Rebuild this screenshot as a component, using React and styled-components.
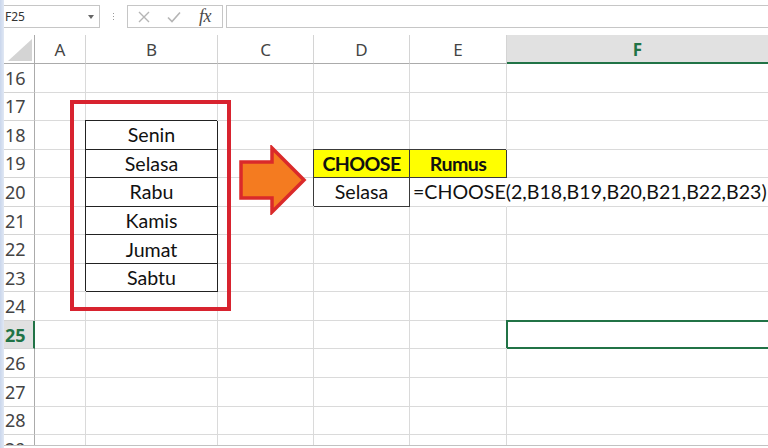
import React from "react";
import styled, { createGlobalStyle } from "styled-components";

const GlobalStyle = createGlobalStyle`
  html, body {
    margin: 0;
    padding: 0;
    background: #fff;
  }
  body {
    overflow: hidden;
  }
`;

const GREEN = "#217346";
const GRID = "#dadada";
const HEAD_LINE = "#ababab";

const COLS = [
  { key: "A", width: 51 },
  { key: "B", width: 132 },
  { key: "C", width: 96 },
  { key: "D", width: 96 },
  { key: "E", width: 97 },
  { key: "F", width: 262, selected: true },
];
const ROWS = [16, 17, 18, 19, 20, 21, 22, 23, 24, 25, 26, 27, 28, 29];
const SELECTED_ROW = 25;
const DAYS = ["Senin", "Selasa", "Rabu", "Kamis", "Jumat", "Sabtu"];

const CELLS = {
  D19: { text: "CHOOSE", frame: "#3a3a3a", fill: "#ffff00", bold: true },
  E19: { text: "Rumus", frame: "#3a3a3a", fill: "#ffff00", bold: true },
  D20: { text: "Selasa", frame: "#3a3a3a" },
  E20: { text: "=CHOOSE(2,B18,B19,B20,B21,B22,B23)", align: "flex-start", spill: true },
  F25: { selected: true },
};
DAYS.forEach((d, i) => {
  CELLS[`B${18 + i}`] = { text: d, frame: "#222" };
});

const Page = styled.div`
  position: relative;
  width: 768px;
  height: 448px;
  overflow: hidden;
  display: flex;
  background: #fff;
`;

const EdgeStrip = styled.div`
  width: 4px;
  flex: none;
  background: linear-gradient(to right, #c9d6ec, #e1e8f4);
`;

const Main = styled.div`
  flex: 1;
  min-width: 0;
  display: flex;
  flex-direction: column;
`;

const FormulaBar = styled.div`
  height: 35px;
  flex: none;
  box-sizing: border-box;
  padding-top: 5px;
  display: flex;
  align-items: flex-start;
`;

const NameBox = styled.div`
  width: 96px;
  height: 23px;
  box-sizing: border-box;
  border: 1px solid #c6c6c6;
  border-left: none;
  display: flex;
  align-items: center;
  justify-content: space-between;
  padding: 0 5px 0 1px;
  font: 12px "Noto Sans", sans-serif;
  color: #333;
`;

const DropArrow = styled.span`
  width: 0;
  height: 0;
  border-left: 3px solid transparent;
  border-right: 3px solid transparent;
  border-top: 4px solid #666;
`;

const Grip = styled.div`
  width: 27px;
  height: 23px;
  display: flex;
  flex-direction: column;
  align-items: center;
  justify-content: center;
  gap: 2px;

  span {
    width: 1px;
    height: 1px;
    background: #9a9a9a;
  }
`;

const FxBox = styled.div`
  width: 96px;
  height: 23px;
  box-sizing: border-box;
  border: 1px solid #c6c6c6;
  display: flex;
  align-items: center;
  padding-left: 10px;
  gap: 17px;
`;

const FxLabel = styled.span`
  margin-left: 1px;
  font: italic 18px "Liberation Serif", "DejaVu Serif", serif;
  color: #4a4a4a;
  letter-spacing: -0.5px;
  line-height: 1;
  padding-bottom: 2px;
`;

const FormulaInput = styled.div`
  flex: 1;
  height: 23px;
  margin-left: 3px;
  box-sizing: border-box;
  border: 1px solid #c6c6c6;
  border-right: none;
`;

const Sheet = styled.div`
  flex: 1;
  min-height: 0;
  overflow: hidden;
  display: grid;
  grid-template-columns: 31px ${COLS.map((c) => `${c.width}px`).join(" ")};
  grid-template-rows: 29px;
  grid-auto-rows: 28.55px;
  align-content: start;
`;

const Corner = styled.div`
  box-sizing: border-box;
  border-right: 1px solid ${HEAD_LINE};
  border-bottom: 1px solid ${HEAD_LINE};
  display: flex;
  align-items: flex-end;
  justify-content: flex-end;
  padding: 0 2px 2px 0;
`;

const ColHeader = styled.div`
  box-sizing: border-box;
  border-right: 1px solid #d4d4d4;
  border-bottom: ${(p) => (p.$active ? `2px solid ${GREEN}` : `1px solid ${HEAD_LINE}`)};
  background: ${(p) => (p.$active ? "#e1e1e1" : "#fff")};
  color: ${(p) => (p.$active ? GREEN : "#444")};
  font: ${(p) => (p.$active ? 700 : 400)} 17px "Noto Sans", sans-serif;
  display: flex;
  align-items: center;
  justify-content: center;
  padding-top: 1px;
`;

const RowHeader = styled.div`
  box-sizing: border-box;
  border-right: ${(p) => (p.$active ? `2px solid ${GREEN}` : `1px solid ${HEAD_LINE}`)};
  border-bottom: 1px solid #d4d4d4;
  background: ${(p) => (p.$active ? "#e1e1e1" : "#fff")};
  color: ${(p) => (p.$active ? GREEN : "#444")};
  font: ${(p) => (p.$active ? 700 : 400)} 18px "Noto Sans", sans-serif;
  display: flex;
  align-items: center;
  padding-left: 1px;
`;

const Cell = styled.div`
  box-sizing: border-box;
  border-right: 1px solid ${(p) => (p.$spill ? "transparent" : p.$frame || GRID)};
  border-bottom: 1px solid ${(p) => (p.$selected ? GREEN : p.$frame || GRID)};
  background: ${(p) => p.$fill || "transparent"};
  box-shadow: ${(p) =>
    p.$selected
      ? `-1px -1px 0 ${GREEN}, inset 1px 1px 0 ${GREEN}, inset 0 -1px 0 ${GREEN}`
      : p.$frame
      ? `-1px -1px 0 ${p.$frame}`
      : "none"};
  display: flex;
  align-items: center;
  justify-content: ${(p) => p.$align || "center"};
  padding: 0 3px;
  white-space: nowrap;
  overflow: visible;
  font: ${(p) => (p.$bold ? 700 : 400)} 19.6px "Lato", "Liberation Sans", sans-serif;
  letter-spacing: ${(p) => (p.$bold ? "-0.6px" : "0")};
  color: #111;
`;

const Highlight = styled.div`
  position: absolute;
  left: 70px;
  top: 100px;
  width: 161px;
  height: 211px;
  box-sizing: border-box;
  border: 4px solid #d8232f;
  pointer-events: none;
`;

const ArrowMark = styled.svg`
  position: absolute;
  left: 238px;
  top: 145px;
  width: 70px;
  height: 70px;
  pointer-events: none;
`;

const BottomEdge = styled.div`
  height: 2px;
  flex: none;
  border-top: 1px solid #c2c2c2;
  background: #fff;
`;

function CrossIcon() {
  return (
    <svg width="12" height="12" viewBox="0 0 12 12">
      <path d="M1 1L11 11M11 1L1 11" stroke="#b5b5b5" strokeWidth="1.4" fill="none" />
    </svg>
  );
}

function CheckIcon() {
  return (
    <svg width="14" height="12" viewBox="0 0 14 12">
      <path d="M1 6.5L5 10.5L13 1.5" stroke="#b5b5b5" strokeWidth="1.6" fill="none" />
    </svg>
  );
}

function CornerTriangle() {
  return (
    <svg width="24" height="22" viewBox="0 0 24 22">
      <polygon points="24,0 24,22 0,22" fill="#d4d4d4" />
    </svg>
  );
}

export default function App() {
  return (
    <Page>
      <GlobalStyle />
      <EdgeStrip />
      <Main>
        <FormulaBar>
          <NameBox>
            F25
            <DropArrow />
          </NameBox>
          <Grip>
            <span />
            <span />
            <span />
          </Grip>
          <FxBox>
            <CrossIcon />
            <CheckIcon />
            <FxLabel>fx</FxLabel>
          </FxBox>
          <FormulaInput />
        </FormulaBar>
        <Sheet>
          <Corner>
            <CornerTriangle />
          </Corner>
          {COLS.map((c) => (
            <ColHeader key={c.key} $active={c.selected}>
              {c.key}
            </ColHeader>
          ))}
          {ROWS.map((r) => (
            <React.Fragment key={r}>
              <RowHeader $active={r === SELECTED_ROW}>{r}</RowHeader>
              {COLS.map((c) => {
                const cell = CELLS[`${c.key}${r}`] || {};
                return (
                  <Cell
                    key={c.key}
                    $frame={cell.frame}
                    $fill={cell.fill}
                    $bold={cell.bold}
                    $align={cell.align}
                    $spill={cell.spill}
                    $selected={cell.selected}
                  >
                    {cell.text}
                  </Cell>
                );
              })}
            </React.Fragment>
          ))}
        </Sheet>
        <BottomEdge />
      </Main>
      <Highlight />
      <ArrowMark viewBox="0 0 70 70">
        <polygon
          points="3,17 34,17 34,3 66,35 34,67 34,53 3,53"
          fill="#f47b20"
          stroke="#da2a2a"
          strokeWidth="3.5"
          strokeLinejoin="miter"
        />
      </ArrowMark>
    </Page>
  );
}
